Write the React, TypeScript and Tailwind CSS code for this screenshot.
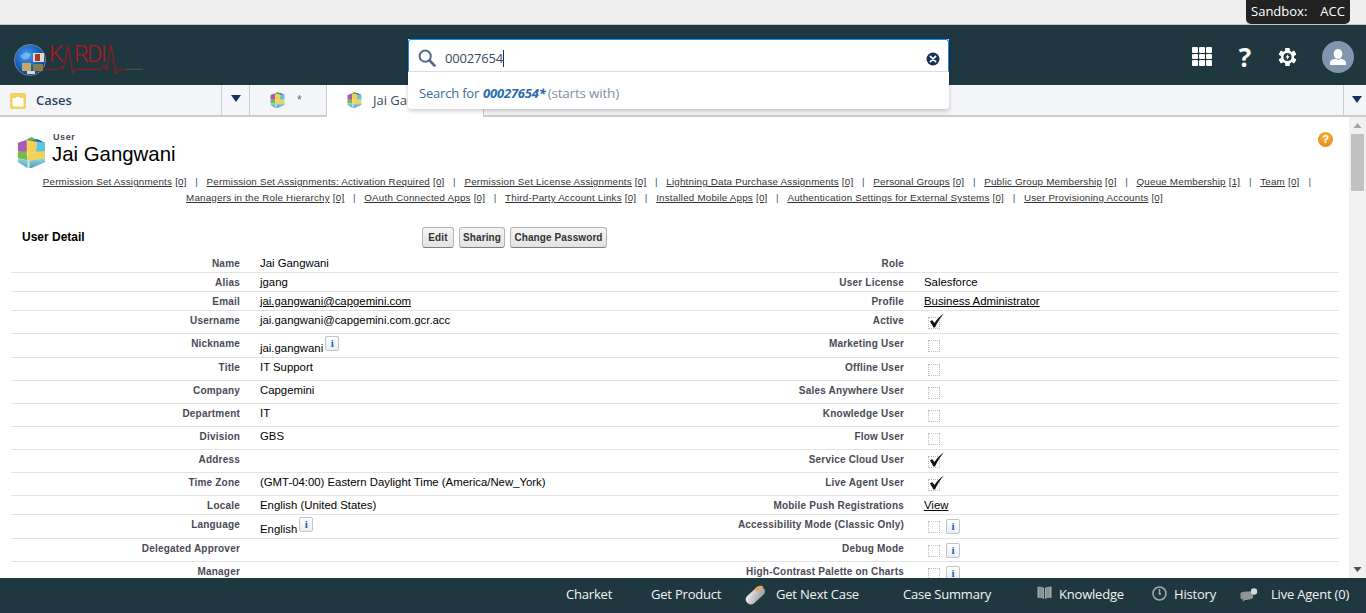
import React from "react";

function Cube({ size, id }: { size: number; id: string }) {
  return (
    <svg width={size} height={size * 1.07} viewBox="0 0 30 32" className="block shrink-0">
      <defs>
        <linearGradient id={id} x1="0" y1="0" x2="0" y2="1">
          <stop offset="0" stopColor="#8fd8ea" />
          <stop offset="1" stopColor="#5a9db5" />
        </linearGradient>
      </defs>
      <polygon points="9,3 15,0 21,3 15,5" fill="#6fb04a" />
      <polygon points="15,4 21,2 29,6 21,6" fill="#2f62c4" />
      <polygon points="1,6 9,3 11,5 10,16 1,15" fill="#a45cb8" />
      <polygon points="10,5 15,4 21,5 19,15 11,17 10,11" fill="#f5d04a" />
      <polygon points="21,5 29,6 29,15 19,16" fill="#5fc4dc" />
      <polygon points="1,15 10,15 11,24 1,22" fill="#7cb848" />
      <polygon points="11,17 19,15 29,15 29,22 19,25 11,25" fill="#efd35a" />
      <polygon points="1,22 11,24 11,32 1,26" fill={`url(#${id})`} />
      <polygon points="11,25 29,22 29,26 15,32 11,32" fill={`url(#${id})`} />
      <polygon points="11,24 13,24 13,32 11,32" fill="#c3e8f1" />
    </svg>
  );
}

function Logo() {
  return (
    <div className="relative w-[135px] h-[40px] ml-[14px] mt-[19px] font-['Roboto',sans-serif]">
      <svg width="32" height="32" viewBox="0 0 32 32" className="absolute left-0 top-0">
        <defs>
          <radialGradient id="globe" cx="0.4" cy="0.35" r="0.75">
            <stop offset="0" stopColor="#3f9cf0" />
            <stop offset="0.7" stopColor="#0f4fb0" />
            <stop offset="1" stopColor="#0b2f70" />
          </radialGradient>
        </defs>
        <circle cx="16" cy="16" r="15.5" fill="url(#globe)" stroke="#6f8590" strokeWidth="1" />
        <path d="M6 12 L12 8 L17 10 L15 14 L10 16 Z" fill="#9ccbf5" opacity="0.6" />
        <rect x="19" y="9" width="11" height="9" fill="#e8d8c8" />
        <rect x="21" y="10" width="5" height="7" fill="#a53a2a" />
        <rect x="8" y="19" width="9" height="8" fill="#c8a860" />
        <rect x="19" y="20" width="10" height="7" fill="#8a7a50" />
        <rect x="13" y="27" width="8" height="3" fill="#d8d8c8" />
      </svg>
      <span className="absolute left-[35px] top-[-3px] text-[23px] leading-[28px] text-[#b5161e] font-light">K</span>
      <span className="absolute left-[60px] top-[-3px] text-[23px] leading-[28px] text-[#b5161e] font-light tracking-[-1.5px]">RDI</span>
      <svg width="135" height="40" viewBox="0 0 135 40" className="absolute left-0 top-0">
        <polyline
          points="31,25.3 45,25.3 47,22.7 49,25.3 51,17.7 54.3,1 58.7,29.3 61,25.3 87.7,25.3 90,21 92.7,26 97,1 102,30 104.3,25.3 112,25.3"
          fill="none"
          stroke="#a8141c"
          strokeWidth="1"
        />
        <polyline points="112,25.3 129,25.3" fill="none" stroke="#6a4a4e" strokeWidth="1" />
      </svg>
    </div>
  );
}

function Gear() {
  const teeth = [0, 60, 120, 180, 240, 300];
  return (
    <svg width="19" height="20" viewBox="0 0 20 20">
      {teeth.map((a) => (
        <rect key={a} x="7.5" y="0.5" width="5" height="5" rx="0.8" fill="#fff" transform={`rotate(${a} 10 10)`} />
      ))}
      <circle cx="10" cy="10" r="7" fill="#fff" />
      <circle cx="10" cy="10" r="4.3" fill="#1f3840" />
      <path d="M11 6.5 L7.8 10.6 H9.8 L9 13.5 L12.3 9.2 H10.2 Z" fill="#fff" />
    </svg>
  );
}

function Caret() {
  return (
    <svg width="10" height="7" viewBox="0 0 10 7">
      <path d="M0 0 H10 L5 7 Z" fill="#16325c" />
    </svg>
  );
}

function Info() {
  return (
    <span className="inline-flex items-center justify-center w-[14px] h-[15px] rounded-[2px] border border-[#c5c5c5] bg-[linear-gradient(#ffffff,#e8eef5)] font-['Liberation_Serif',serif] font-bold text-[11px] leading-none text-[#1a5fb4]">
      i
    </span>
  );
}

function Check({ on }: { on?: boolean }) {
  return (
    <span className="relative inline-block w-[12px] h-[12px] border border-dotted border-[#bbbbbb]">
      {on && (
        <svg width="16" height="15" viewBox="0 0 16 15" className="absolute left-[0px] top-[-5px]">
          <path d="M1 8.5 L3 7 L5.5 10 C8 6 11 3 15 0.5 C11 5 8.5 9 6 14.5 L4.5 14.5 Z" fill="#111" />
        </svg>
      )}
    </span>
  );
}

type Link = [string, string];
const line1: Link[] = [
  ["Permission Set Assignments", "[0]"],
  ["Permission Set Assignments: Activation Required", "[0]"],
  ["Permission Set License Assignments", "[0]"],
  ["Lightning Data Purchase Assignments", "[0]"],
  ["Personal Groups", "[0]"],
  ["Public Group Membership", "[0]"],
  ["Queue Membership", "[1]"],
  ["Team", "[0]"],
];
const line2: Link[] = [
  ["Managers in the Role Hierarchy", "[0]"],
  ["OAuth Connected Apps", "[0]"],
  ["Third-Party Account Links", "[0]"],
  ["Installed Mobile Apps", "[0]"],
  ["Authentication Settings for External Systems", "[0]"],
  ["User Provisioning Accounts", "[0]"],
];

function LinkLine({ items, trailing }: { items: Link[]; trailing?: boolean }) {
  return (
    <div className={`flex justify-center h-[16px] leading-[16px] whitespace-nowrap ${trailing ? "pl-[5px]" : ""}`}>
      {items.map(([t, n], i) => (
        <React.Fragment key={t}>
          <span className="underline">{t}</span>
          <span className="underline ml-[3px]">{n}</span>
          {i < items.length - 1 && <span className="mx-[8.6px] text-[#33527a]">|</span>}
          {i === items.length - 1 && trailing && <span className="ml-[9px] text-[#33527a]">|</span>}
        </React.Fragment>
      ))}
    </div>
  );
}

const U = ({ children }: { children: React.ReactNode }) => <span className="underline">{children}</span>;

const CheckInfo = () => (
  <span className="flex items-center gap-[6px] ml-[4px] mt-[2px]">
    <Check />
    <Info />
  </span>
);
const CheckOnly = ({ on }: { on?: boolean }) => (
  <span className="flex items-center ml-[4px] mt-[4px]">
    <Check on={on} />
  </span>
);

type Row = { h: string; l: string; v?: React.ReactNode; r: string; w?: React.ReactNode; last?: boolean };
const rows: Row[] = [
  { h: "h-[19px]", l: "Name", v: "Jai Gangwani", r: "Role" },
  { h: "h-[19px]", l: "Alias", v: "jgang", r: "User License", w: "Salesforce" },
  { h: "h-[19px]", l: "Email", v: <U>jai.gangwani@capgemini.com</U>, r: "Profile", w: <U>Business Administrator</U> },
  { h: "h-[23px]", l: "Username", v: "jai.gangwani@capgemini.com.gcr.acc", r: "Active", w: <CheckOnly on /> },
  {
    h: "h-[24px]",
    l: "Nickname",
    v: (
      <span className="flex items-start gap-[2px]">
        <span className="mt-[5px]">jai.gangwani</span>
        <span>
          <Info />
        </span>
      </span>
    ),
    r: "Marketing User",
    w: <CheckOnly />,
  },
  { h: "h-[23px]", l: "Title", v: "IT Support", r: "Offline User", w: <CheckOnly /> },
  { h: "h-[23px]", l: "Company", v: "Capgemini", r: "Sales Anywhere User", w: <CheckOnly /> },
  { h: "h-[23px]", l: "Department", v: "IT", r: "Knowledge User", w: <CheckOnly /> },
  { h: "h-[23px]", l: "Division", v: "GBS", r: "Flow User", w: <CheckOnly /> },
  { h: "h-[23px]", l: "Address", r: "Service Cloud User", w: <CheckOnly on /> },
  { h: "h-[23px]", l: "Time Zone", v: "(GMT-04:00) Eastern Daylight Time (America/New_York)", r: "Live Agent User", w: <CheckOnly on /> },
  { h: "h-[19px]", l: "Locale", v: "English (United States)", r: "Mobile Push Registrations", w: <U>View</U> },
  {
    h: "h-[24px]",
    l: "Language",
    v: (
      <span className="flex items-start gap-[2px]">
        <span className="mt-[5px]">English</span>
        <span>
          <Info />
        </span>
      </span>
    ),
    r: "Accessibility Mode (Classic Only)",
    w: <CheckInfo />,
  },
  { h: "h-[23px]", l: "Delegated Approver", r: "Debug Mode", w: <CheckInfo /> },
  { h: "h-[23px]", l: "Manager", r: "High-Contrast Palette on Charts", w: <CheckInfo />, last: true },
];

function DetailRow({ row }: { row: Row }) {
  return (
    <div
      className={`grid grid-cols-[229px_435px_229px_1fr] ${row.h} ${row.last ? "" : "border-b border-[#e3e3e3]"} box-border`}
    >
      <div className="text-right font-bold text-[10px] leading-[13px] pt-[3px] text-[#4a4a56] tracking-[0.2px]">{row.l}</div>
      <div className="pl-[20px] text-[11.36px] leading-[14px] pt-[2px] text-black">{row.v}</div>
      <div className="text-right font-bold text-[10px] leading-[13px] pt-[3px] text-[#4a4a56] tracking-[0.2px]">{row.r}</div>
      <div className="pl-[20px] text-[11.36px] leading-[14px] pt-[2px] text-black">{row.w}</div>
    </div>
  );
}

function Btn({ w, children }: { w: string; children: React.ReactNode }) {
  return (
    <span className={`flex items-center justify-center h-[21px] ${w} rounded-[3px] border border-[#b5b5b5] border-b-[#7f7f7f] bg-[linear-gradient(#f5f5f5,#e3e3e3)] font-bold text-[10px] tracking-[0.1px] text-[#333]`}>
      {children}
    </span>
  );
}

function FootItem({ icon, text, cls }: { icon?: React.ReactNode; text: string; cls: string }) {
  return (
    <div className={`flex items-center ${cls}`}>
      {icon}
      <span className="text-[13px] tracking-[-0.2px] text-[#f2f4f4] whitespace-nowrap">{text}</span>
    </div>
  );
}

export default function App() {
  return (
    <div className="relative w-[1366px] h-[613px] overflow-hidden flex flex-col bg-white font-['Liberation_Sans',Arial,sans-serif]">
      {/* Browser strip */}
      <div className="h-[25px] shrink-0 bg-[#eeeeee] border-b border-[#c8c8c8] flex justify-end pr-[16px]">
        <div className="w-[104px] h-[24px] bg-[#222222] rounded-b-[5px] flex items-center justify-center gap-[13px] text-[13px] text-white font-['Open_Sans',sans-serif]">
          <span>Sandbox:</span>
          <span>ACC</span>
        </div>
      </div>

      {/* Header */}
      <header className="relative h-[60px] shrink-0 bg-[#1f3840] flex justify-between">
        <Logo />
        <div className="flex items-center pr-[12px] pt-[4px]">
          <div className="grid grid-cols-3 gap-[1px] w-[20px] h-[19px] mr-[25px] mb-[1px]">
            {Array.from({ length: 9 }).map((_, i) => (
              <span key={i} className="bg-white rounded-[1px]" />
            ))}
          </div>
          <span className="w-[16px] text-center text-[26px] font-bold leading-none text-white font-['Open_Sans',sans-serif] mr-[25px]">?</span>
          <span className="mr-[25px] flex">
            <Gear />
          </span>
          <span className="w-[32px] h-[32px] rounded-full bg-[#7f96ae] flex items-center justify-center">
            <svg width="18" height="18" viewBox="0 0 18 18">
              <ellipse cx="9" cy="6" rx="4.3" ry="5" fill="#fff" />
              <path d="M1 17 V14.5 C1 12.5 3.5 11.5 6.5 10.8 C8 12 10 12 11.5 10.8 C14.5 11.5 17 12.5 17 14.5 V17 Z" fill="#fff" />
            </svg>
          </span>
        </div>
      </header>

      {/* Tabs */}
      <nav className="h-[32px] shrink-0 bg-[#f3f5f9] border-b-2 border-[#c9cdd2] flex">
        <div className="w-[222px] h-[30px] flex items-center pl-[10px] pt-[2px] border-r border-[#c9cdd2]">
          <span className="w-[16px] h-[16px] rounded-[2px] bg-[#f3d05f] flex items-center justify-center mr-[10px]">
            <svg width="12" height="11" viewBox="0 0 12 11">
              <path d="M4 2 V1 H8 V2 H11.5 V10.5 H0.5 V2 Z" fill="#fff" />
            </svg>
          </span>
          <span className="text-[13px] font-semibold text-[#2a3f5f] font-['Open_Sans',sans-serif]">Cases</span>
        </div>
        <div className="w-[28px] h-[30px] flex items-center justify-center border-r border-[#c9cdd2] pb-[4px]">
          <Caret />
        </div>
        <div className="w-[77px] h-[30px] flex items-center pl-[20px] border-r border-[#c9cdd2]">
          <Cube size={15} id="c1" />
          <span className="ml-[12px] text-[12px] text-[#54698d]">*</span>
        </div>
        <div className="w-[157px] h-[32px] bg-white flex items-center pl-[20px] pb-[1px] border-r border-[#c9cdd2]">
          <Cube size={15} id="c2" />
          <span className="ml-[11px] text-[13px] text-[#3a4a60] font-['Open_Sans',sans-serif] whitespace-nowrap">Jai Gangwani</span>
        </div>
        <div className="flex-1" />
        <div className="w-[23px] h-[30px] flex items-center justify-center border-l border-[#c9cdd2] pl-[4px] pb-[2px]">
          <Caret />
        </div>
      </nav>

      {/* Search overlay */}
      <div className="absolute left-[408px] top-[39px] w-[541px] h-[70px] bg-white rounded-b-[3px] shadow-[0_2px_4px_rgba(0,0,0,0.2)] font-['Open_Sans',sans-serif]">
        <div className="h-[33px] flex items-center border border-[#1589ee] border-b-[#d8dde6] rounded-t-[3px] pl-[9px] pr-[8px] pt-[6px]">
          <svg width="18" height="18" viewBox="0 0 18 18" className="shrink-0 mb-[2px]">
            <circle cx="7.2" cy="7.2" r="5.6" fill="none" stroke="#54698d" strokeWidth="2" />
            <path d="M11.5 11.5 L16.5 16.5" stroke="#54698d" strokeWidth="2.6" strokeLinecap="round" />
          </svg>
          <span className="ml-[9px] text-[13px] text-[#3a4a60] tracking-[-0.2px] border-r border-[#16325c] leading-[17px]">00027654</span>
          <span className="flex-1" />
          <svg width="14" height="14" viewBox="0 0 14 14" className="shrink-0">
            <circle cx="7" cy="7" r="6.5" fill="#16325c" />
            <path d="M4.4 4.4 L9.6 9.6 M9.6 4.4 L4.4 9.6" stroke="#fff" strokeWidth="1.7" strokeLinecap="round" />
          </svg>
        </div>
        <div className="h-[37px] flex items-center pl-[11px] pt-[6px] text-[13px] tracking-[-0.2px] whitespace-nowrap">
          <span className="text-[#3e6a9b]">Search for</span>
          <span className="ml-[4px] font-bold italic text-[#2b6bb0]">00027654*</span>
          <span className="ml-[2px] text-[13.5px] text-[#8391a3]">(starts with)</span>
        </div>
      </div>

      {/* Body */}
      <main className="flex-1 min-h-0 flex overflow-hidden">
        <div className="relative w-[1349px] overflow-hidden text-[#333]">
          {/* Page title */}
          <div className="flex pl-[17px] pt-[20px] h-[49px] box-border">
            <Cube size={29} id="c3" />
            <div className="ml-[6px] mt-[-5px]">
              <div className="ml-[1px] text-[9px] leading-[10px] font-bold tracking-[0.6px] text-[#4a4a56]">User</div>
              <div className="text-[20.4px] leading-[24px] text-black">Jai Gangwani</div>
            </div>
          </div>
          <span className="absolute left-[1318px] top-[15px] w-[15px] h-[15px] rounded-full bg-[radial-gradient(circle_at_50%_30%,#f6b73c,#d9830f)] text-white text-[11px] font-bold leading-[15px] text-center">
            ?
          </span>

          {/* Related links */}
          <div className="text-[9.8px] tracking-[0.2px] text-[#333] mt-[8px]">
            <LinkLine items={line1} trailing />
            <LinkLine items={line2} />
          </div>

          {/* Detail */}
          <div className="mx-[11px] mt-[20px]">
            <div className="flex items-center h-[23px] mb-[5px]">
              <span className="ml-[11px] mb-[1px] font-bold text-[12px] text-black w-[400px]">User Detail</span>
              <div className="flex gap-[5px] mb-[1px]">
                <Btn w="w-[32px]">Edit</Btn>
                <Btn w="w-[46px]">Sharing</Btn>
                <Btn w="w-[97px]">Change Password</Btn>
              </div>
            </div>
            <div className="w-[1328px]">
              {rows.map((r) => (
                <DetailRow key={r.l} row={r} />
              ))}
            </div>
          </div>
        </div>

        {/* Scrollbar */}
        <div className="w-[17px] bg-[#f1f1f1] flex flex-col items-center">
          <svg width="9" height="5" viewBox="0 0 9 5" className="mt-[6px]">
            <path d="M0.5 5 L4.5 0 L8.5 5 Z" fill="#a3a3a3" />
          </svg>
          <div className="w-[13px] h-[57px] bg-[#c1c1c1] mt-[6px]" />
          <div className="flex-1" />
          <svg width="9" height="5" viewBox="0 0 9 5" className="mb-[6px]">
            <path d="M0.5 0 L4.5 5 L8.5 0 Z" fill="#505050" />
          </svg>
        </div>
      </main>

      {/* Footer */}
      <footer className="h-[35px] shrink-0 bg-[#1f3840] flex items-center pl-[566px] pb-[2px] font-['Open_Sans',sans-serif]">
        <FootItem text="Charket" cls="w-[85px]" />
        <FootItem text="Get Product" cls="w-[94px]" />
        <FootItem
          cls="w-[158px]"
          text="Get Next Case"
          icon={
            <svg width="20" height="20" viewBox="0 0 20 20" className="mr-[11px]">
              <defs>
                <linearGradient id="rock" x1="0" y1="0" x2="1" y2="1">
                  <stop offset="0" stopColor="#f4f4f4" />
                  <stop offset="1" stopColor="#8f9494" />
                </linearGradient>
              </defs>
              <rect x="-1" y="5.5" width="22" height="10" rx="4.5" fill="url(#rock)" transform="rotate(-42 10 10)" />
              <path d="M10 4 C12 1 16 0 18.5 1.5 C17 3 14 5 12 7 Z" fill="#e8a850" />
            </svg>
          }
        />
        <FootItem text="Case Summary" cls="w-[134px]" />
        <FootItem
          cls="w-[115px]"
          text="Knowledge"
          icon={
            <svg width="15" height="14" viewBox="0 0 15 14" className="mr-[7px] mb-[3px]">
              <path d="M0.5 0.8 C3 0.6 5.5 1 7 2 V13 C5.5 12 3 11.6 0.5 11.8 Z M14.5 0.8 C12 0.6 9.5 1 8 2 V13 C9.5 12 12 11.6 14.5 11.8 Z" fill="#a4acae" />
              <path d="M3 1 V11.5 M5 1.4 V12 M10 1.4 V12 M12 1 V11.5" stroke="#5c6b70" strokeWidth="0.8" />
            </svg>
          }
        />
        <FootItem
          cls="w-[88px]"
          text="History"
          icon={
            <svg width="15" height="15" viewBox="0 0 15 15" className="mr-[7px] mb-[3px]">
              <circle cx="7.5" cy="7.5" r="6.5" fill="none" stroke="#a4acae" strokeWidth="1.5" />
              <path d="M7.5 3 V8 H9" fill="none" stroke="#a4acae" strokeWidth="1.5" />
            </svg>
          }
        />
        <FootItem
          cls="w-[111px]"
          text="Live Agent (0)"
          icon={
            <svg width="18" height="14" viewBox="0 0 18 14" className="mr-[13px]">
              <path d="M0.5 5 C3 3 11 3 13 4.5 V10 C11 11.5 7 12 5 12 L2.5 14 L3 11.5 C1.5 11 0.5 10.5 0.5 10 Z" fill="#8c9597" />
              <circle cx="14" cy="3.5" r="3.2" fill="#d6dada" />
            </svg>
          }
        />
      </footer>
    </div>
  );
}
